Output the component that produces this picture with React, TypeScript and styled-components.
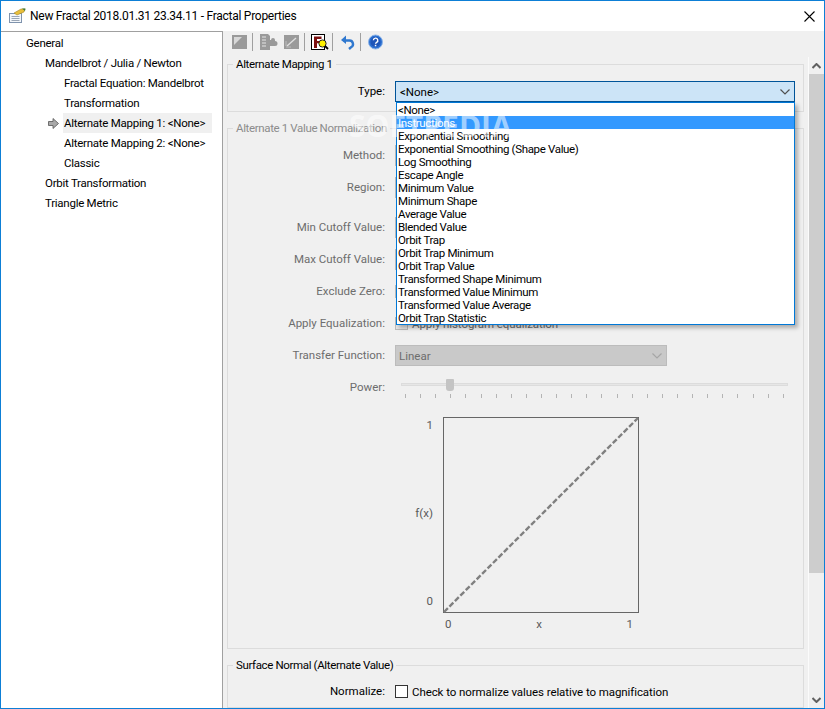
import React from "react";
import styled, { createGlobalStyle } from "styled-components";

const GlobalStyle = createGlobalStyle`
    html, body {
        margin: 0;
        padding: 0;
        background: #fff;
    }
    body {
        font-family: Roboto, "Open Sans", sans-serif;
        font-size: 11.5px;
        color: #000;
        overflow: hidden;
    }
`;

const Window = styled.div`
    position: relative;
    box-sizing: border-box;
    width: 825px;
    height: 709px;
    border: 1px solid #0d7fd6;
    display: flex;
    flex-direction: column;
    overflow: hidden;
`;

const TitleBar = styled.div`
    height: 30px;
    flex: none;
    display: flex;
    align-items: center;
    background: #fff;
    font-size: 12px;
`;

const AppIcon = styled.svg`
    margin: -2px 0 0 8px;
    width: 17px;
    height: 15px;
`;

const Title = styled.span`
    margin-left: 4px;
    letter-spacing: -0.27px;
`;

const CloseIcon = styled.svg`
    margin-left: auto;
    margin-right: 9px;
    width: 11px;
    height: 11px;
`;

const Body = styled.div`
    flex: 1;
    min-height: 0;
    display: flex;
`;

const Tree = styled.div`
    box-sizing: border-box;
    width: 222px;
    flex: none;
    padding-top: 1px;
    background: #fff;
    border-top: 1px solid #a0a0a0;
    border-right: 1px solid #a0a0a0;
    letter-spacing: -0.26px;
`;

const TreeRow = styled.div<{ $indent: number }>`
    height: 20px;
    display: flex;
    align-items: center;
    padding-left: ${(p) => p.$indent}px;
    white-space: nowrap;
`;

const TreeArrow = styled.svg`
    width: 11px;
    height: 11px;
    margin-right: 4px;
`;

const SelectedLabel = styled.span`
    display: flex;
    align-items: center;
    box-sizing: border-box;
    width: 149px;
    height: 20px;
    padding-left: 1px;
    background: #f0f0f0;
`;

const Panel = styled.div`
    flex: 1;
    min-width: 0;
    display: flex;
    flex-direction: column;
    background: #f0f0f0;
`;

const Toolbar = styled.div`
    box-sizing: border-box;
    height: 25px;
    flex: none;
    display: flex;
    align-items: center;
    padding: 0 0 3px 9px;
`;

const ToolIcon = styled.svg<{ $gap?: number }>`
    width: 16px;
    height: 16px;
    flex: none;
    overflow: visible;
    margin-right: ${(p) => p.$gap ?? 0}px;
`;

const ToolSep = styled.div`
    width: 1px;
    height: 18px;
    margin: 0 7px 0 4px;
    background: #a0a0a0;
`;

const Content = styled.div`
    flex: 1;
    min-height: 0;
    display: flex;
`;

const Scroller = styled.div`
    flex: 1;
    min-width: 0;
    padding: 0 4px;
    overflow: hidden;
`;

const Group = styled.fieldset<{ $top?: number; $pad?: number }>`
    box-sizing: border-box;
    margin: 0 0 8px;
    padding: ${(p) => p.$top ?? 3}px 0 ${(p) => p.$pad ?? 0}px;
    min-width: 0;
    border: 1px solid #dcdcdc;
`;

const GroupTitle = styled.legend<{ $off?: boolean }>`
    margin-left: 5px;
    padding: 0 3px;
    line-height: 16px;
    letter-spacing: -0.36px;
    color: ${(p) => (p.$off ? "#8c8c8c" : "#000")};
`;

const Row = styled.div<{ $h?: number }>`
    display: grid;
    grid-template-columns: 157px 1fr;
    column-gap: 10px;
    height: ${(p) => p.$h ?? 32}px;
    align-items: start;
`;

const Label = styled.div<{ $off?: boolean }>`
    margin-top: 8px;
    text-align: right;
    line-height: 16px;
    color: ${(p) => (p.$off ? "#6d6d6d" : "#000")};
`;

const Control = styled.div`
    margin-top: 6px;
    display: flex;
    align-items: center;
    min-height: 21px;
`;

const ActiveSelect = styled.div`
    position: relative;
    box-sizing: border-box;
    width: 400px;
    height: 21px;
    display: flex;
    align-items: center;
    justify-content: space-between;
    padding: 0 4px;
    background: #cce4f7;
    border: 1px solid #005499;
`;

const DropList = styled.div`
    position: absolute;
    z-index: 10;
    top: 20px;
    left: 0;
    box-sizing: border-box;
    width: 399px;
    border: 1px solid #0078d7;
    background: #fff;
    box-shadow: 3px 3px 4px rgba(0, 0, 0, 0.28);
`;

const DropItem = styled.div<{ $active?: boolean }>`
    height: 13px;
    line-height: 15px;
    padding-left: 1px;
    letter-spacing: -0.34px;
    white-space: nowrap;
    background: ${(p) => (p.$active ? "#3399ff" : "transparent")};
    color: ${(p) => (p.$active ? "#fff" : "#000")};
`;

const DisabledSelect = styled.div<{ $w: number }>`
    box-sizing: border-box;
    width: ${(p) => p.$w}px;
    height: 21px;
    display: flex;
    align-items: center;
    justify-content: space-between;
    padding: 0 4px 0 3px;
    background: #c9c9c9;
    border: 1px solid #bcbcbc;
    color: #6d6d6d;
`;

const Chevron = styled.svg`
    width: 10px;
    height: 6px;
    margin-left: auto;
`;

const Check = styled.div<{ $off?: boolean }>`
    box-sizing: border-box;
    width: 13px;
    height: 13px;
    flex: none;
    border: 1px solid ${(p) => (p.$off ? "#bcbcbc" : "#333")};
    background: ${(p) => (p.$off ? "#e6e6e6" : "#fff")};
`;

const CheckText = styled.span<{ $off?: boolean }>`
    margin-left: 4px;
    letter-spacing: -0.08px;
    color: ${(p) => (p.$off ? "#6d6d6d" : "#000")};
`;

const Slider = styled.div`
    position: relative;
    box-sizing: border-box;
    width: 387px;
    margin: 8px 0 0 6px;
    padding-top: 4px;
`;

const SliderTrack = styled.div`
    height: 3px;
    background: #e6e6e6;
    border: 1px solid #dcdcdc;
    box-sizing: border-box;
`;

const SliderThumb = styled.div`
    position: absolute;
    top: 0;
    left: 45px;
    width: 8px;
    height: 12px;
    background: #c4c4c4;
    border-radius: 1px 1px 3px 3px;
`;

const Ticks = styled.div`
    display: flex;
    justify-content: space-between;
    margin-top: 8px;
    padding: 0 4px;
`;

const Tick = styled.div`
    width: 1px;
    height: 4px;
    background: #b4b4b4;
`;

const Chart = styled.div`
    display: grid;
    grid-template-columns: 28px 196px;
    margin: 14px 0 0 187px;
    color: #5a5a5a;
`;

const YAxis = styled.div`
    display: flex;
    flex-direction: column;
    justify-content: space-between;
    align-items: flex-end;
    padding: 0 10px 4px 0;
    line-height: 16px;
`;

const Plot = styled.svg`
    display: block;
    width: 196px;
    height: 196px;
`;

const XAxis = styled.div`
    grid-column: 2;
    display: flex;
    justify-content: space-between;
    margin-top: 3px;
    padding: 0 6px 0 2px;
    line-height: 16px;
`;

const Scrollbar = styled.div`
    width: 15px;
    flex: none;
    margin-top: 1px;
    display: flex;
    flex-direction: column;
    border-left: 1px solid #fbfbfb;
`;

const ScrollButton = styled.div`
    height: 17px;
    flex: none;
    display: flex;
    align-items: center;
    justify-content: center;
`;

const ScrollThumb = styled.div`
    height: 499px;
    flex: none;
    background: #cdcdcd;
`;

const ScrollTrack = styled.div`
    flex: 1;
`;

const ScrollChevron = styled.svg`
    width: 9px;
    height: 6px;
`;

const Watermark = styled.div`
    position: absolute;
    z-index: 20;
    top: 105px;
    left: 348px;
    font-family: "Open Sans", sans-serif;
    font-weight: 700;
    font-size: 30px;
    line-height: 40px;
    color: rgba(255, 255, 255, 0.55);
    pointer-events: none;
    white-space: nowrap;
`;

const dropItems = [
    "<None>",
    "Instructions",
    "Exponential Smoothing",
    "Exponential Smoothing (Shape Value)",
    "Log Smoothing",
    "Escape Angle",
    "Minimum Value",
    "Minimum Shape",
    "Average Value",
    "Blended Value",
    "Orbit Trap",
    "Orbit Trap Minimum",
    "Orbit Trap Value",
    "Transformed Shape Minimum",
    "Transformed Value Minimum",
    "Transformed Value Average",
    "Orbit Trap Statistic",
];

const ChevronDown = ({ color = "#505050" }: { color?: string }) => (
    <Chevron viewBox="0 0 10 6">
        <polyline points="0.5,0.5 5,5 9.5,0.5" fill="none" stroke={color} strokeWidth="1.2" />
    </Chevron>
);

const ToolbarIcons = () => (
    <Toolbar>
        <ToolIcon viewBox="0 0 16 16">
            <rect x="0" y="1" width="15" height="14" fill="#9a9a9a" />
            <polygon points="2,3 10,3 2,11" fill="#d8d8d8" />
        </ToolIcon>
        <ToolSep />
        <ToolIcon viewBox="0 0 16 16" $gap={8}>
            <path d="M0 0h8l2 2v4h1a2 2 0 0 1 4 0v1a2 2 0 0 1 0 5h-5v4H0z" fill="#9a9a9a" />
            <path d="M2 3h4M2 6h4M2 9h4M2 12h4" stroke="#e4e4e4" strokeWidth="1" />
        </ToolIcon>
        <ToolIcon viewBox="0 0 16 16">
            <rect x="0" y="1" width="15" height="14" fill="#9a9a9a" />
            <path d="M3 12 L12 4" stroke="#e0e0e0" strokeWidth="1.4" />
            <path d="M2 12V7M2 13h5" stroke="#bdbdbd" strokeWidth="1" />
        </ToolIcon>
        <ToolSep />
        <ToolIcon viewBox="0 0 16 16">
            <rect x="-0.5" y="0.5" width="13" height="15" fill="#fff" stroke="#000" />
            <path d="M2 2.5h7.5v2.5H5v2h4v2.3H5V14H2z" fill="#7c1010" />
            <circle cx="10.5" cy="9.5" r="3.6" fill="#fff200" stroke="#222" />
            <path d="M13 12l3 3" stroke="#000" strokeWidth="1.8" />
        </ToolIcon>
        <ToolSep />
        <ToolIcon viewBox="0 0 16 16">
            <path d="M3.5 6.5 H9 a3.6 3.6 0 0 1 2 6.8 L9 15" fill="none" stroke="#2f78cf" strokeWidth="2.4" />
            <polygon points="1,6 6,1.5 6,10" fill="#2f78cf" />
        </ToolIcon>
        <ToolSep />
        <ToolIcon viewBox="0 0 16 16">
            <circle cx="7.5" cy="8" r="7" fill="#2b6fd0" stroke="#8db4e8" />
            <circle cx="7.5" cy="8" r="5" fill="#1e55b8" />
            <path d="M5.4 6.3a2.2 2.2 0 1 1 3.2 2c-.7.4-1 .8-1 1.5" fill="none" stroke="#fff" strokeWidth="1.4" />
            <rect x="6.8" y="10.8" width="1.5" height="1.5" fill="#fff" />
        </ToolIcon>
    </Toolbar>
);

const App = () => {
    return (
        <Window>
            <GlobalStyle />
            <TitleBar>
                <AppIcon viewBox="0 0 17 15">
                    <rect x="0.5" y="5.5" width="12" height="9" fill="#f4f7fb" stroke="#7f93ad" />
                    <path d="M2.5 8.5h8M2.5 10.5h8M2.5 12.5h8" stroke="#9aa6b6" />
                    <polygon points="5,5 12,1 16,1 15,4 8,7" fill="#e8bf3a" stroke="#a5852a" strokeWidth="0.6" />
                    <polygon points="13,0.5 16.5,0.5 16,3" fill="#3d7a3a" />
                </AppIcon>
                <Title>New Fractal 2018.01.31 23.34.11 - Fractal Properties</Title>
                <CloseIcon viewBox="0 0 11 11">
                    <path d="M0.5 0.5L10.5 10.5M10.5 0.5L0.5 10.5" stroke="#000" strokeWidth="1.1" />
                </CloseIcon>
            </TitleBar>
            <Body>
                <Tree>
                    <TreeRow $indent={25}>General</TreeRow>
                    <TreeRow $indent={44}>Mandelbrot / Julia / Newton</TreeRow>
                    <TreeRow $indent={63}>Fractal Equation: Mandelbrot</TreeRow>
                    <TreeRow $indent={63}>Transformation</TreeRow>
                    <TreeRow $indent={47}>
                        <TreeArrow viewBox="0 0 11 11">
                            <polygon points="0.5,3.5 5,3.5 5,0.5 10.5,5.5 5,10.5 5,7.5 0.5,7.5" fill="#a9a9a9" stroke="#555" strokeWidth="0.8" />
                        </TreeArrow>
                        <SelectedLabel>Alternate Mapping 1: &lt;None&gt;</SelectedLabel>
                    </TreeRow>
                    <TreeRow $indent={63}>Alternate Mapping 2: &lt;None&gt;</TreeRow>
                    <TreeRow $indent={63}>Classic</TreeRow>
                    <TreeRow $indent={44}>Orbit Transformation</TreeRow>
                    <TreeRow $indent={44}>Triangle Metric</TreeRow>
                </Tree>
                <Panel>
                    <ToolbarIcons />
                    <Content>
                        <Scroller>
                            <Group $pad={4}>
                                <GroupTitle>Alternate Mapping 1</GroupTitle>
                                <Row>
                                    <Label>Type:</Label>
                                    <Control>
                                        <ActiveSelect>
                                            &lt;None&gt;
                                            <ChevronDown />
                                            <DropList>
                                                {dropItems.map((item) => (
                                                    <DropItem key={item} $active={item === "Instructions"}>
                                                        {item}
                                                    </DropItem>
                                                ))}
                                            </DropList>
                                        </ActiveSelect>
                                    </Control>
                                </Row>
                            </Group>
                            <Group $pad={16}>
                                <GroupTitle $off>Alternate 1 Value Normalization</GroupTitle>
                                <Row>
                                    <Label $off>Method:</Label>
                                    <Control>
                                        <DisabledSelect $w={272} />
                                    </Control>
                                </Row>
                                <Row $h={40}>
                                    <Label $off>Region:</Label>
                                    <Control>
                                        <DisabledSelect $w={272} />
                                    </Control>
                                </Row>
                                <Row>
                                    <Label $off>Min Cutoff Value:</Label>
                                    <Control>
                                        <DisabledSelect $w={272} />
                                    </Control>
                                </Row>
                                <Row>
                                    <Label $off>Max Cutoff Value:</Label>
                                    <Control>
                                        <DisabledSelect $w={272} />
                                    </Control>
                                </Row>
                                <Row>
                                    <Label $off>Exclude Zero:</Label>
                                    <Control>
                                        <Check $off />
                                    </Control>
                                </Row>
                                <Row>
                                    <Label $off>Apply Equalization:</Label>
                                    <Control>
                                        <Check $off />
                                        <CheckText $off>Apply histogram equalization</CheckText>
                                    </Control>
                                </Row>
                                <Row>
                                    <Label $off>Transfer Function:</Label>
                                    <Control>
                                        <DisabledSelect $w={272}>
                                            Linear
                                            <ChevronDown color="#a6a6a6" />
                                        </DisabledSelect>
                                    </Control>
                                </Row>
                                <Row>
                                    <Label $off>Power:</Label>
                                    <Slider>
                                        <SliderTrack />
                                        <SliderThumb />
                                        <Ticks>
                                            {Array.from({ length: 26 }, (_, i) => (
                                                <Tick key={i} />
                                            ))}
                                        </Ticks>
                                    </Slider>
                                </Row>
                                <Chart>
                                    <YAxis>
                                        <span>1</span>
                                        <span>f(x)</span>
                                        <span>0</span>
                                    </YAxis>
                                    <Plot viewBox="0 0 196 196">
                                        <rect x="0.5" y="0.5" width="195" height="195" fill="none" stroke="#666" />
                                        <line x1="1" y1="195" x2="195" y2="1" stroke="#808080" strokeWidth="2.4" strokeDasharray="5.5 2.2" />
                                    </Plot>
                                    <XAxis>
                                        <span>0</span>
                                        <span>x</span>
                                        <span>1</span>
                                    </XAxis>
                                </Chart>
                            </Group>
                            <Group $top={2}>
                                <GroupTitle>Surface Normal (Alternate Value)</GroupTitle>
                                <Row>
                                    <Label>Normalize:</Label>
                                    <Control>
                                        <Check />
                                        <CheckText>Check to normalize values relative to magnification</CheckText>
                                    </Control>
                                </Row>
                            </Group>
                        </Scroller>
                        <Scrollbar>
                            <ScrollButton>
                                <ScrollChevron viewBox="0 0 9 6">
                                    <polyline points="0.5,5 4.5,1 8.5,5" fill="none" stroke="#606060" strokeWidth="2" />
                                </ScrollChevron>
                            </ScrollButton>
                            <ScrollThumb />
                            <ScrollTrack />
                            <ScrollButton>
                                <ScrollChevron viewBox="0 0 9 6">
                                    <polyline points="0.5,1 4.5,5 8.5,1" fill="none" stroke="#606060" strokeWidth="2" />
                                </ScrollChevron>
                            </ScrollButton>
                        </Scrollbar>
                    </Content>
                </Panel>
            </Body>
            <Watermark>SOFTPEDIA</Watermark>
        </Window>
    );
};

export default App;
